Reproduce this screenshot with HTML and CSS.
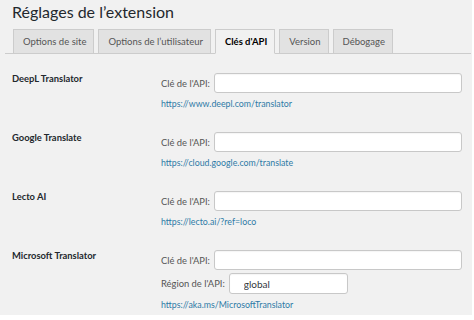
FILE: index.html
```html
<!DOCTYPE html>
<html lang="fr">
<head>
  <meta charset="UTF-8" />
  <title>Réglages de l’extension</title>
  <link rel="stylesheet" href="styles.css">
</head>
<body>
  <div class="page">
    <h1>Réglages de l’extension</h1>

    <!-- Tabs -->
    <nav class="tabs">
      <a class="tab" href="#">Options de site</a>
      <a class="tab" href="#">Options de l’utilisateur</a>
      <a class="tab active" href="#">Clés d'API</a>
      <a class="tab" href="#">Version</a>
      <a class="tab" href="#">Débogage</a>
    </nav>

    <!-- API keys -->
    <div class="rows">
      <div class="row">
        <div class="name">DeepL Translator</div>
        <div class="fields">
          <label class="field"><span>Clé de l'API:</span><input type="text" class="wide"></label>
          <a class="link" href="#">https://www.deepl.com/translator</a>
        </div>
      </div>

      <div class="row">
        <div class="name">Google Translate</div>
        <div class="fields">
          <label class="field"><span>Clé de l'API:</span><input type="text" class="wide"></label>
          <a class="link" href="#">https://cloud.google.com/translate</a>
        </div>
      </div>

      <div class="row">
        <div class="name">Lecto AI</div>
        <div class="fields">
          <label class="field"><span>Clé de l'API:</span><input type="text" class="wide"></label>
          <a class="link" href="#">https://lecto.ai/?ref=loco</a>
        </div>
      </div>

      <div class="row">
        <div class="name">Microsoft Translator</div>
        <div class="fields">
          <label class="field"><span>Clé de l'API:</span><input type="text" class="wide"></label>
          <label class="field"><span>Région de l'API:</span><input type="text" class="short" value="global"></label>
          <a class="link" href="#">https://aka.ms/MicrosoftTranslator</a>
        </div>
      </div>
    </div>
  </div>
</body>
</html>
```

FILE: styles.css
```css
* {
  box-sizing: border-box;
  margin: 0;
  padding: 0;
}

body {
  background: #fff;
  font-family: Lato, 'Open Sans', sans-serif;
  color: #23282d;
}

.page {
  width: 472px;
  height: 315px;
  background: #f1f1f1;
  padding-top: 1px;
}

h1 {
  font-size: 16px;
  font-weight: 400;
  line-height: 22px;
  margin-left: 12px;
}

/* === TABS === */
.tabs {
  display: flex;
  gap: 4px;
  margin: 6px 1px 0 5px;
  padding-left: 8px;
  border-bottom: 1px solid #ccc;
  height: 25px;
}

.tab {
  height: 25px;
  padding: 0 7px 0 9px;
  font-size: 9.5px;
  line-height: 23px;
  color: #555;
  text-decoration: none;
  background: #e2e2e2;
  border: 1px solid #ccc;
}

.tab.active {
  background: #f1f1f1;
  border-bottom-color: #f1f1f1;
  color: #000;
  font-weight: 700;
}

/* === ROWS === */
.rows {
  padding: 17px 10px 0 12px;
}

.row {
  display: flex;
  margin-bottom: 18px;
}

.name {
  width: 149px;
  font-size: 9.4px;
  font-weight: 700;
  line-height: 16px;
}

.fields {
  flex: 1;
  padding-top: 2px;
  display: flex;
  flex-direction: column;
  gap: 3px;
}

.field {
  display: flex;
  align-items: center;
  gap: 4px;
  font-size: 9.4px;
  color: #555;
}

input {
  height: 20px;
  border: 1px solid #c8c8c8;
  border-radius: 3px;
  background: #fff;
  font-family: inherit;
  font-size: 10px;
  color: #32373c;
  padding: 0 14px;
  box-shadow: inset 0 1px 1px rgba(0,0,0,0.04);
}

input.wide {
  flex: 1;
}

input.short {
  width: 119px;
  height: 21px;
}

.link {
  font-size: 8.8px;
  line-height: 16px;
  color: #2e7aa6;
  text-decoration: none;
}
```
